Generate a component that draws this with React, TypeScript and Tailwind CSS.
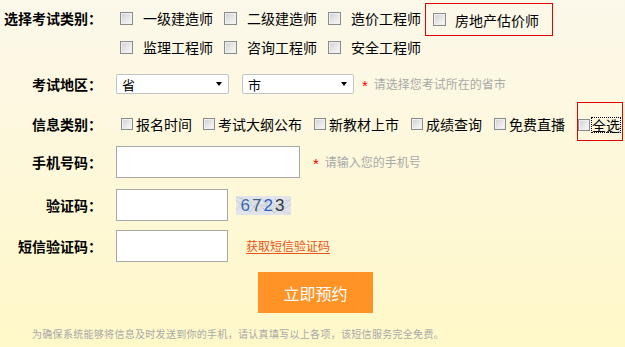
import React from "react";

const CJK = "font-['Noto_Sans_CJK_SC','Noto_Sans',sans-serif]";

function Box({ size = 13 }: { size?: number }) {
  return (
    <span
      className={
        (size === 13 ? "w-[13px] h-[13px] " : "w-[12px] h-[12px] ") +
        "inline-block shrink-0 border border-[#8a8b8b] bg-gradient-to-br from-[#cfcfcf] via-[#e6e6e6] to-[#fbfbfb] shadow-[inset_0_0_0_1px_#f0f0f0]"
      }
    />
  );
}

function Label({ children }: { children: React.ReactNode }) {
  return (
    <div className="w-[102px] shrink-0 text-right text-[14px] font-bold text-black leading-none">
      {children}
    </div>
  );
}

function Item1({ text, w = "w-[104px]" }: { text: string; w?: string }) {
  return (
    <div className={"flex items-center " + w}>
      <span className="ml-[4px] flex">
        <Box />
      </span>
      <span className="ml-[10px] text-[14px] leading-none text-black whitespace-nowrap">{text}</span>
    </div>
  );
}

function Item4({ text }: { text: string }) {
  return (
    <div className="flex items-center mr-[11px]">
      <Box size={12} />
      <span className="ml-[3px] text-[14px] leading-none text-black whitespace-nowrap">{text}</span>
    </div>
  );
}

function Select({ text, w }: { text: string; w: string }) {
  return (
    <div
      className={
        "h-[20px] flex items-center justify-between border border-[#c3c3c3] rounded-[2px] bg-white pl-[5px] pr-[6px] " + w
      }
    >
      <span className="text-[13px] leading-none text-black">{text}</span>
      <svg width="6" height="4" viewBox="0 0 6 4">
        <polygon points="0,0 6,0 3,4" fill="#000" />
      </svg>
    </div>
  );
}

function Captcha() {
  return (
    <span className="relative ml-[8px] inline-flex h-[19px] w-[55px] items-center justify-center overflow-hidden bg-[#e1e5eb]">
      <svg className="absolute inset-0" width="55" height="19" viewBox="0 0 55 19">
        <path d="M0 4 L14 16 L25 2 L38 17 L55 3" stroke="#c2c8d1" strokeWidth="1" fill="none" />
        <path d="M0 14 L10 3 L22 15 L34 4 L46 15 L55 8" stroke="#c9ced6" strokeWidth="1" fill="none" />
        <path d="M3 9 L52 11" stroke="#d2d6dc" strokeWidth="1" fill="none" />
        <path d="M0 1 L55 18" stroke="#d0d4da" strokeWidth="1" fill="none" />
        <rect x="5" y="2" width="1" height="1" fill="#aab1bc" />
        <rect x="20" y="15" width="1" height="1" fill="#aab1bc" />
        <rect x="31" y="6" width="1" height="1" fill="#aab1bc" />
        <rect x="44" y="13" width="1" height="1" fill="#aab1bc" />
        <rect x="50" y="4" width="1" height="1" fill="#aab1bc" />
        <rect x="12" y="9" width="1" height="1" fill="#aab1bc" />
        <rect x="27" y="12" width="1" height="1" fill="#aab1bc" />
        <rect x="39" y="3" width="1" height="1" fill="#aab1bc" />
      </svg>
      <span className="relative font-['Liberation_Sans',sans-serif] text-[17px] leading-none tracking-[2px]">
        <span className="text-[#3d6db3]">6</span>
        <span className="text-[#3e5f80]">7</span>
        <span className="text-[#2b5fc4]">2</span>
        <span className="text-[#2e3540]">3</span>
      </span>
    </span>
  );
}

export default function App() {
  return (
    <div
      className={
        "w-[625px] h-[347px] overflow-hidden bg-gradient-to-b from-[#fcf8ea] to-[#fff8c8] text-black " + CJK
      }
    >
      {/* Row 1 */}
      <div className="flex items-center h-[36px]">
        <Label>选择考试类别：</Label>
        <div className="ml-[14px] flex items-center h-full">
          <Item1 text="一级建造师" />
          <Item1 text="二级建造师" />
          <Item1 text="造价工程师" w="w-[101px]" />
          <div className="self-start mt-[3px] h-[33px] w-[128px] border border-[#e60000] flex items-center pl-[7px]">
            <Box />
            <span className="ml-[9px] text-[14px] leading-none whitespace-nowrap">房地产估价师</span>
          </div>
        </div>
      </div>
      {/* Row 2 */}
      <div className="flex items-center h-[22px]">
        <div className="w-[102px] shrink-0" />
        <div className="ml-[14px] flex items-center">
          <Item1 text="监理工程师" />
          <Item1 text="咨询工程师" />
          <Item1 text="安全工程师" />
        </div>
      </div>
      {/* Row 3 */}
      <div className="mt-[14px] flex items-center h-[24px]">
        <Label>考试地区：</Label>
        <div className="ml-[14px] flex items-center">
          <Select text="省" w="w-[113px]" />
          <div className="ml-[13px]">
            <Select text="市" w="w-[112px]" />
          </div>
          <span className="ml-[8px] font-['Liberation_Sans',sans-serif] text-[15px] leading-none text-[#ff0000] pt-[3px]">*</span>
          <span className="ml-[6px] text-[12px] leading-none text-[#a9a9a9]">请选择您考试所在的省市</span>
        </div>
      </div>
      {/* Row 4 */}
      <div className="mt-[6px] flex items-center h-[44px]">
        <Label>信息类别：</Label>
        <div className="ml-[19px] flex items-center h-full">
          <Item4 text="报名时间" />
          <div className="flex items-center mr-[12px]">
            <Box size={12} />
            <span className="ml-[3px] text-[14px] leading-none whitespace-nowrap">考试大纲公布</span>
          </div>
          <div className="flex items-center mr-[12px]">
            <Box size={12} />
            <span className="ml-[3px] text-[14px] leading-none whitespace-nowrap">新教材上市</span>
          </div>
          <div className="flex items-center mr-[12px]">
            <Box size={12} />
            <span className="ml-[3px] text-[14px] leading-none whitespace-nowrap">成绩查询</span>
          </div>
          <div className="flex items-center mr-[12px]">
            <Box size={12} />
            <span className="ml-[3px] text-[14px] leading-none whitespace-nowrap">免费直播</span>
          </div>
          <div className="self-start h-[39px] w-[46px] border border-[#e60000] flex items-center pt-[6px]">
            <Box size={12} />
            <span className="ml-[2px] text-[14px] leading-none whitespace-nowrap outline-1 outline-dotted outline-black">全选</span>
          </div>
        </div>
      </div>
      {/* Row 5 */}
      <div className="flex items-center h-[32px]">
        <Label>手机号码：</Label>
        <div className="ml-[14px] flex items-center">
          <div className="w-[184px] h-[32px] border border-[#a8a8a8] bg-white" />
          <span className="ml-[13px] font-['Liberation_Sans',sans-serif] text-[15px] leading-none text-[#ff0000] pt-[3px]">*</span>
          <span className="ml-[6px] text-[12px] leading-none text-[#a9a9a9]">请输入您的手机号</span>
        </div>
      </div>
      {/* Row 6 */}
      <div className="mt-[11px] flex items-center h-[32px]">
        <Label>验证码：</Label>
        <div className="ml-[14px] flex items-center">
          <div className="w-[112px] h-[32px] border border-[#a8a8a8] bg-white" />
          <Captcha />
        </div>
      </div>
      {/* Row 7 */}
      <div className="mt-[9px] flex items-center h-[32px]">
        <Label>短信验证码：</Label>
        <div className="ml-[14px] flex items-center">
          <div className="w-[112px] h-[32px] border border-[#a8a8a8] bg-white" />
          <span className="ml-[18px] text-[12px] leading-none text-[#eb5417] underline underline-offset-2">获取短信验证码</span>
        </div>
      </div>
      {/* Button */}
      <div className="mt-[10px] flex pl-[258px]">
        <div className="w-[115px] h-[41px] bg-[#ff9326] flex items-center justify-center text-white text-[16px] leading-none">
          立即预约
        </div>
      </div>
      {/* Footer */}
      <div className="mt-[14px] pl-[32px] text-[10px] leading-[14px] tracking-[0.3px] text-[#a9a9a9] whitespace-nowrap">
        为确保系统能够将信息及时发送到你的手机，请认真填写以上各项，该短信服务完全免费。
      </div>
    </div>
  );
}
